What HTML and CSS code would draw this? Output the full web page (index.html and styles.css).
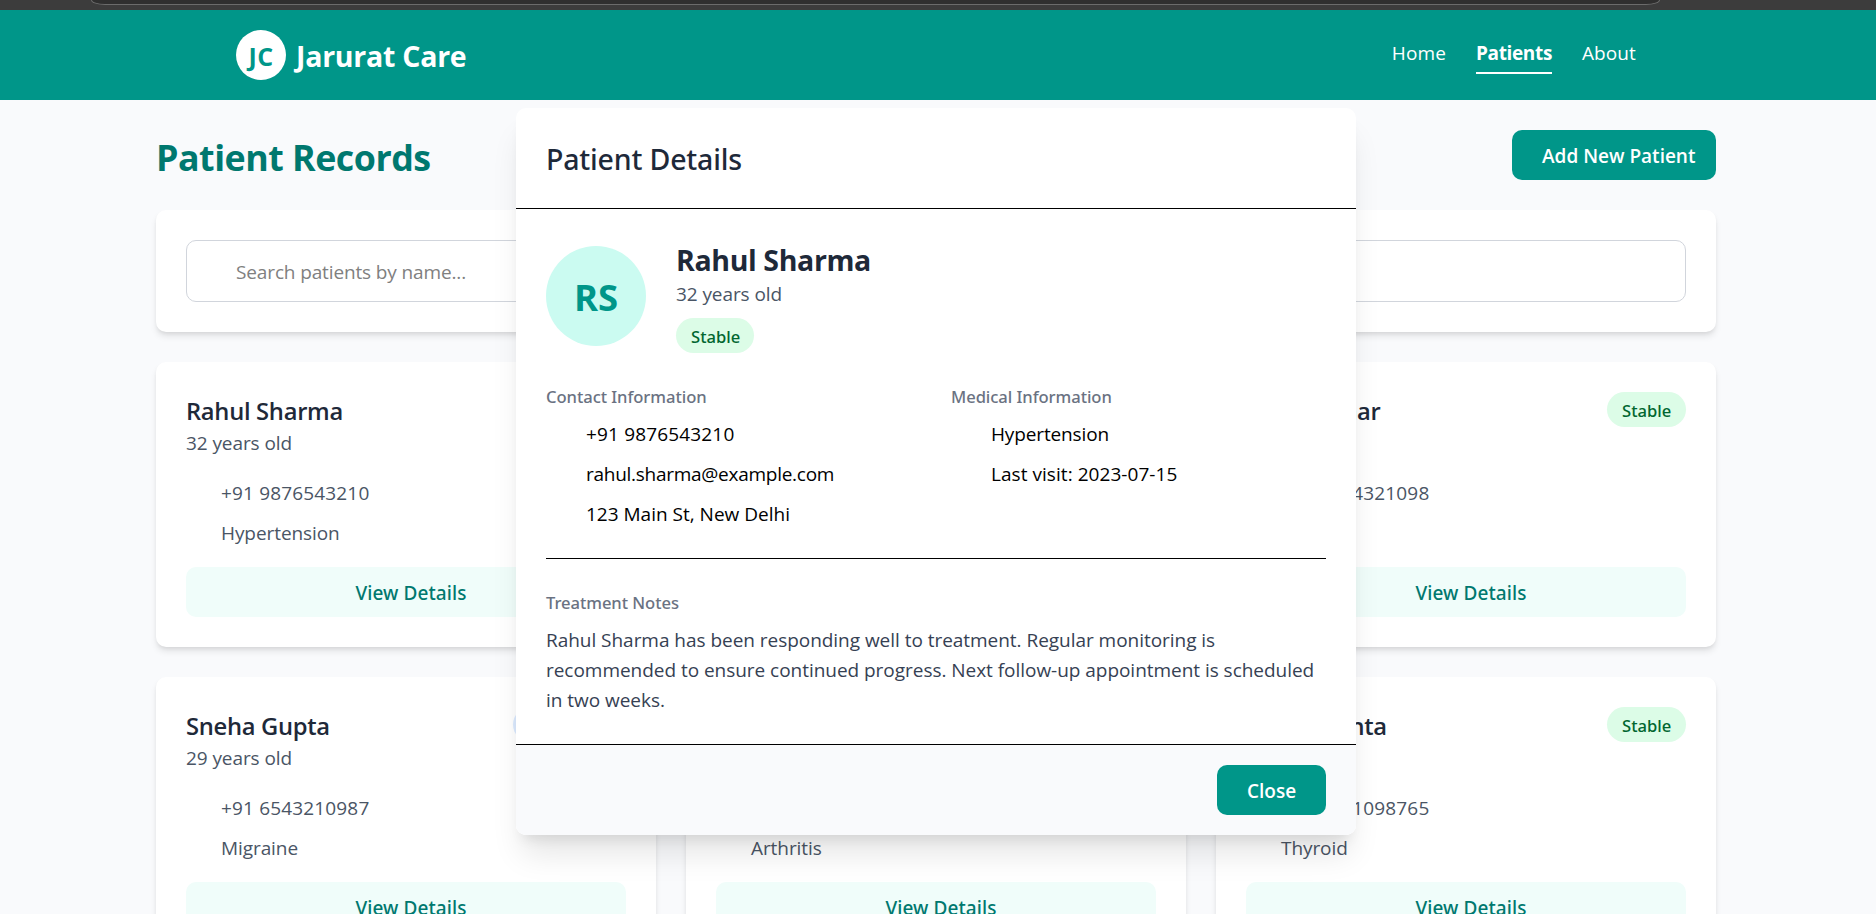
FILE: index.html
```html
<!DOCTYPE html>
<html lang="en">
<head>
<meta charset="utf-8">
<title>Jarurat Care</title>
<link rel="stylesheet" href="styles.css">
</head>
<body>
<div class="chrome"><div class="address"></div></div>
<header class="header">
  <div class="header-inner">
    <div class="brand"><span class="logo"><span class="logo-text">JC</span></span><span class="brand-name">Jarurat Care</span></div>
    <nav class="nav"><a class="nav-link">Home</a><a class="nav-link active">Patients</a><a class="nav-link">About</a></nav>
  </div>
</header>
<main class="main">
  <div class="title-row">
    <h1 class="title">Patient Records</h1>
    <button class="btn add"><span class="btn-label">Add New Patient</span></button>
  </div>
  <div class="search-card"><input class="search" type="text" placeholder="Search patients by name..."></div>
  <div class="grid">
    <article class="card">
      <div class="card-head"><div><h3 class="name">Rahul Sharma</h3><p class="age">32 years old</p></div><span class="badge stable">Stable</span></div>
      <div class="facts"><p class="fact phone">+91 9876543210</p><p class="fact">Hypertension</p></div>
      <button class="view"><span class="view-label">View Details</span></button>
    </article>
    <article class="card">
      <div class="card-head"><div><h3 class="name">Priya Patel</h3><p class="age">28 years old</p></div><span class="badge stable">Stable</span></div>
      <div class="facts"><p class="fact phone">+91 8765432109</p><p class="fact">Diabetes</p></div>
      <button class="view"><span class="view-label">View Details</span></button>
    </article>
    <article class="card">
      <div class="card-head"><div><h3 class="name">Amit Kumar</h3><p class="age">45 years old</p></div><span class="badge stable">Stable</span></div>
      <div class="facts"><p class="fact phone">+91 7654321098</p><p class="fact">Asthma</p></div>
      <button class="view"><span class="view-label">View Details</span></button>
    </article>
    <article class="card">
      <div class="card-head"><div><h3 class="name">Sneha Gupta</h3><p class="age">29 years old</p></div><span class="badge recovering">Recovering</span></div>
      <div class="facts"><p class="fact phone">+91 6543210987</p><p class="fact">Migraine</p></div>
      <button class="view"><span class="view-label">View Details</span></button>
    </article>
    <article class="card">
      <div class="card-head"><div><h3 class="name">Vikram Singh</h3><p class="age">52 years old</p></div><span class="badge stable">Stable</span></div>
      <div class="facts"><p class="fact phone">+91 5432109876</p><p class="fact">Arthritis</p></div>
      <button class="view"><span class="view-label">View Details</span></button>
    </article>
    <article class="card">
      <div class="card-head"><div><h3 class="name">Anjali Mehta</h3><p class="age">35 years old</p></div><span class="badge stable">Stable</span></div>
      <div class="facts"><p class="fact phone">+91 4321098765</p><p class="fact">Thyroid</p></div>
      <button class="view"><span class="view-label">View Details</span></button>
    </article>
  </div>
</main>
<div class="overlay">
  <section class="modal">
    <div class="modal-head"><h2 class="modal-title">Patient Details</h2></div>
    <div class="modal-body">
      <div class="profile">
        <div class="avatar"><span class="initials">RS</span></div>
        <div><h3 class="profile-name">Rahul Sharma</h3><p class="age profile-age">32 years old</p><span class="badge stable profile-badge">Stable</span></div>
      </div>
      <div class="info">
        <div><h4 class="label">Contact Information</h4><div class="items"><p class="item phone">+91 9876543210</p><p class="item mail">rahul.sharma@example.com</p><p class="item">123 Main St, New Delhi</p></div></div>
        <div><h4 class="label">Medical Information</h4><div class="items"><p class="item condition">Hypertension</p><p class="item visit">Last visit: 2023-07-15</p></div></div>
      </div>
      <div class="notes">
        <h4 class="label">Treatment Notes</h4>
        <p class="note-text">Rahul Sharma has been responding well to treatment. Regular monitoring is recommended to ensure continued progress. Next follow-up appointment is scheduled in two weeks.</p>
      </div>
    </div>
    <div class="modal-foot"><button class="btn close"><span class="btn-label">Close</span></button></div>
  </section>
</div>
</body>
</html>
```
FILE: styles.css
```css
*, *::before, *::after { box-sizing: border-box; margin: 0; padding: 0; }
html { height: 100%; overflow: hidden; }
body {
  height: 914px;
  overflow: hidden;
  background: #f9fafc;
  color: #000;
  font-family: "Open Sans", "Noto Sans", sans-serif;
  font-size: 19px;
  line-height: 30px;
}
button { border: 0; font: inherit; }

.chrome { height: 10px; padding: 0 216px 0 91px; background: #3c3c3c; }
.address { height: 5px; border: 1px solid #6b6b6b; border-top: 0; border-radius: 0 0 14px 14px / 0 0 5px 5px; background: #2f2f2f; }

.header { height: 90px; padding-top: 20px; background: #009689; color: #fff; }
.header-inner { display: flex; justify-content: space-between; width: 1400px; margin-left: 236px; }
.brand { display: flex; align-items: center; gap: 10px; height: 50px; }
.logo { display: flex; align-items: center; justify-content: center; width: 50px; height: 50px; border-radius: 50%; background: #fff; }
.logo-text { padding: 1px 0 0; color: #009689; font-size: 25px; font-weight: 700; letter-spacing: 0.4px; }
.brand-name { padding-top: 1px; font-size: 28.5px; font-weight: 700; letter-spacing: -0.25px; }
.nav { display: flex; gap: 30px; padding-top: 8px; }
.nav-link { height: 36px; line-height: 30px; letter-spacing: 0.1px; }
.active { border-bottom: 2px solid #fff; font-weight: 700; letter-spacing: -0.35px; }

.main { width: 1560px; margin-left: 156px; padding-top: 30px; }
.title-row { display: flex; align-items: center; justify-content: space-between; height: 50px; margin-bottom: 30px; }
.title { padding-top: 5px; color: #00786f; font-size: 35.8px; font-weight: 700; line-height: 45px; letter-spacing: -0.5px; }
.btn { height: 50px; border-radius: 10px; background: #009689; color: #fff; font-weight: 600; text-align: left; }
.btn-label { display: block; padding-top: 1px; line-height: 30px; }
.add { width: 204px; padding: 0 20px 0 30px; white-space: nowrap; }

.search-card, .card {
  border-radius: 10px;
  background: #fff;
  box-shadow: 0 5px 7.5px -1.25px rgba(0, 0, 0, .1), 0 2.5px 5px -2.5px rgba(0, 0, 0, .1);
}
.search-card { height: 122px; padding: 30px; margin-bottom: 30px; }
.search { display: block; width: 100%; height: 62px; padding: 2px 20px 0 49px; border: 1px solid #d1d5dc; border-radius: 10px; background: #fff; font: inherit; letter-spacing: -0.13px; }
.search::placeholder { color: #808080; opacity: 1; }

.grid { display: grid; grid-template-columns: repeat(3, 500px); gap: 30px; }
.card { height: 285px; padding: 30px; }
.card-head { display: flex; align-items: flex-start; justify-content: space-between; height: 65px; margin-bottom: 20px; }
.name { padding-top: 2px; margin-bottom: -2px; color: #1e2939; font-size: 23.75px; font-weight: 600; line-height: 35px; letter-spacing: -0.3px; }
.age { padding-top: 1px; margin-bottom: -1px; color: #4a5565; letter-spacing: -0.08px; }
.badge { height: 35px; padding: 6px 14.5px 0; border-radius: 18px; font-family: "Noto Sans", sans-serif; font-size: 16.6px; font-weight: 500; line-height: 25px; }
.stable { width: 79px; padding-left: 15px; background: #dcfce7; color: #016630; }
.recovering { width: 113px; padding: 6px 12px 0; background: #dbeafe; color: #193cb8; }
.facts { display: grid; gap: 10px; height: 70px; padding-left: 35px; margin-bottom: 20px; color: #4a5565; }
.fact { padding-top: 1px; margin-bottom: -1px; letter-spacing: -0.08px; }
.facts .phone, .items .phone { letter-spacing: 0.16px; }
.view { display: block; width: 100%; height: 50px; padding-left: 10px; border-radius: 10px; background: #f0fdfa; color: #00786f; font-family: "Noto Sans", sans-serif; font-weight: 500; letter-spacing: 0.08px; }
.view-label { display: block; padding-top: 1px; }

.overlay { position: absolute; top: 108px; left: 516px; width: 840px; border-radius: 10px; box-shadow: 0 25px 31px -6px rgba(0, 0, 0, .1), 0 10px 12.5px -7.5px rgba(0, 0, 0, .1); }
.modal { overflow: hidden; border-radius: 10px; background: #fff; }
.modal-head { height: 101px; padding: 30px; border-bottom: 1px solid #000; }
.modal-title { padding-top: 1px; color: #1e2939; font-family: "Noto Sans", sans-serif; font-size: 28.5px; font-weight: 500; line-height: 40px; letter-spacing: -0.17px; }
.modal-body { padding: 30px; }
.profile { display: flex; align-items: center; gap: 30px; height: 114px; margin-bottom: 30px; }
.avatar { display: flex; align-items: center; justify-content: center; width: 100px; height: 100px; border-radius: 50%; background: #cbfbf1; color: #009689; }
.initials { padding-top: 2px; font-size: 36.5px; font-weight: 700; line-height: 45px; }
.profile-name { padding-top: 1px; margin-bottom: -1px; color: #1e2939; font-size: 28.5px; font-weight: 700; line-height: 40px; letter-spacing: -0.37px; }
.profile-age { padding-top: 0; }
.profile-badge { display: block; width: 78px; margin-top: 10px; }
.info { display: grid; grid-template-columns: 1fr 1fr; gap: 30px; height: 145px; margin-bottom: 30px; }
.label { padding-top: 1px; margin-bottom: 9px; color: #6a7282; font-family: "Noto Sans", sans-serif; font-size: 16.6px; font-weight: 500; line-height: 25px; letter-spacing: -0.06px; }
.items { display: grid; gap: 10px; padding-left: 40px; }
.item { padding-top: 1px; margin-bottom: -1px; }
.condition { letter-spacing: -0.14px; }
.visit { letter-spacing: 0.05px; }
.mail { letter-spacing: -0.27px; }
.notes { padding-top: 30px; border-top: 1px solid #000; }
.note-text { padding-top: 1px; margin-bottom: -1px; color: #364153; letter-spacing: -0.035px; }
.modal-foot { display: flex; justify-content: flex-end; height: 91px; padding: 20px 30px; border-top: 1px solid #000; background: #f9fafc; }
.close { width: 109px; padding: 0 30px; }
```
